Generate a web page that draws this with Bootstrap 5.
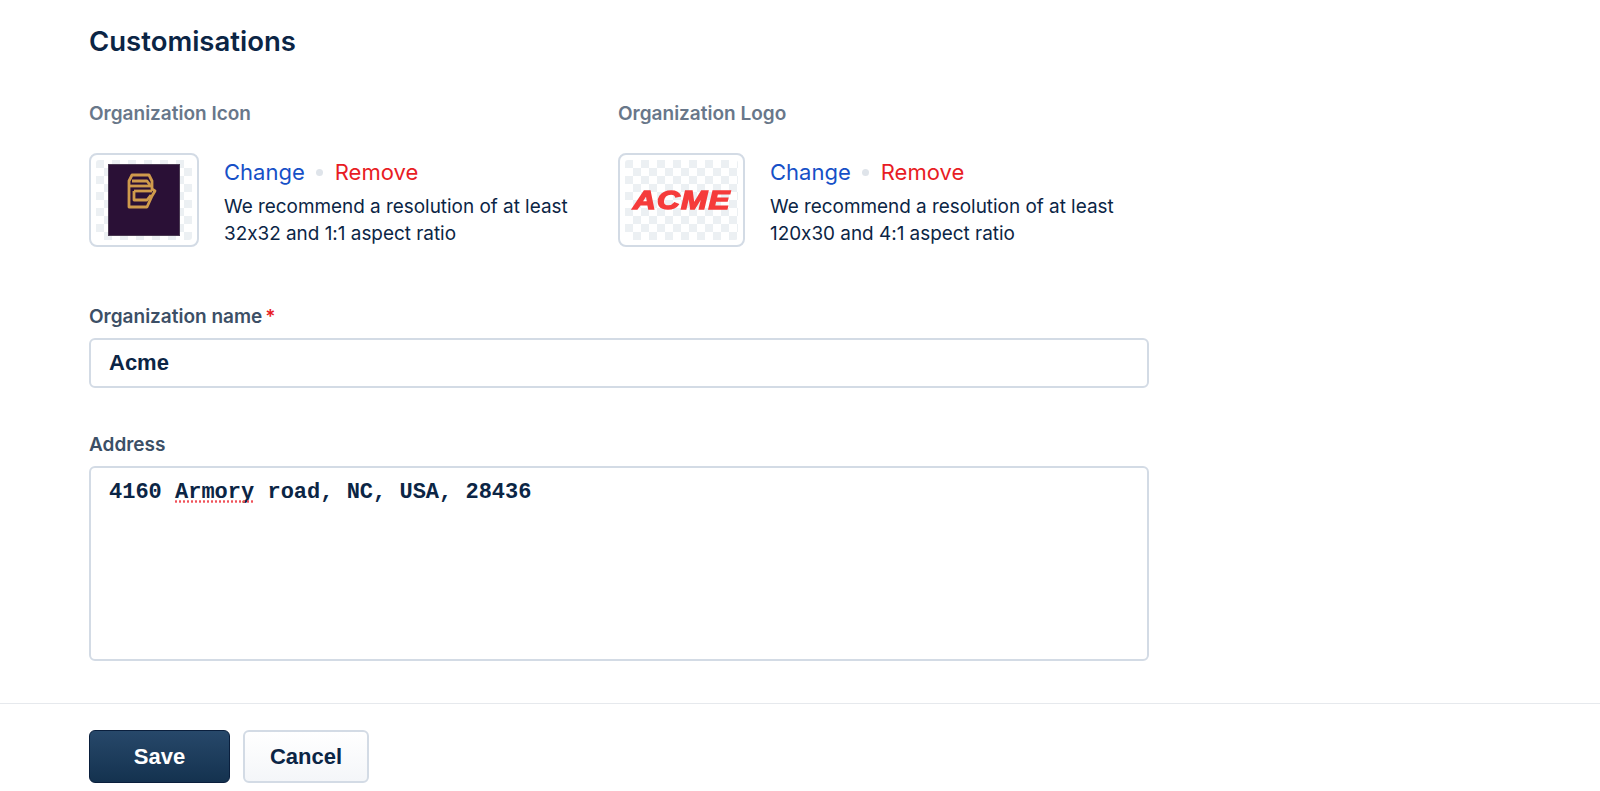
<!DOCTYPE html>
<html lang="en">
<head>
  <meta charset="UTF-8" />
  <meta name="viewport" content="width=device-width, initial-scale=1.0"/>
  <title>Customisations</title>
  <link href="https://cdn.jsdelivr.net/npm/bootstrap@5.3.0/dist/css/bootstrap.min.css" rel="stylesheet">
  <style>
    body { font-family: Inter, "Liberation Sans", sans-serif; font-feature-settings: "calt" 0; color: #0b2545; background: #fff; overflow: hidden; }
    .page-wrap { width: 1600px; height: 791px; padding-top: 25px; }
    .page-inner { padding-left: 89px; width: 1149px; }
    .page-title { font-size: 27.5px; line-height: 32px; font-weight: 600; color: #0b2545; margin: 0 0 46px; }
    .upload-label { font-size: 19px; line-height: 22px; font-weight: 600; color: #68778a; margin-bottom: 28px; }
    .upload-col-a { width: 529px; }
    .preview-box { height: 94px; border: 2px solid #d3dbe5; border-radius: 8px; padding: 5px; background: #fff; flex: none; }
    .preview-a { width: 110px; margin-right: 25px; }
    .preview-b { width: 127px; margin-right: 25px; }
    .checker { height: 100%; border-radius: 3px; display: flex; align-items: center; justify-content: center;
      background: repeating-conic-gradient(#ecf0f3 0 25%, #fff 0 50%) 8px 0 / 16px 16px; }
    .icon-tile { width: 72px; height: 72px; background: #2a1036; display: flex; justify-content: center; padding: 8px 4px 0 0; border: 1px solid #4a3a52; }
    .icon-tile svg { filter: blur(.7px); }
    .acme-mark { font-family: "Liberation Sans", sans-serif; font-weight: 700; font-style: italic; font-size: 25px; line-height: 1; letter-spacing: 1px; color: #f53b3b; -webkit-text-stroke: 1.4px #f53b3b; transform: scaleX(1.26); }
    .upload-actions { font-size: 22px; line-height: 26px; margin-top: 6px; margin-bottom: 8px; display: flex; align-items: center; }
    .act-change { color: #1650c7; text-decoration: none; }
    .act-remove { color: #e81c24; text-decoration: none; }
    .act-dot { width: 7px; height: 7px; border-radius: 50%; background: #dfe4ea; margin: 0 11.5px; }
    .upload-hint { font-size: 18.9px; line-height: 27px; color: #0b2545; }
    .field-label { font-size: 19px; line-height: 22px; font-weight: 600; color: #3c4f66; margin-bottom: 10px; display: block; }
    .req-star { color: #e81c24; margin-left: 3px; }
    .field-input.form-control { height: 50px; border: 2px solid #d3dbe5; border-radius: 6px; padding: 0 18px; font-family: "Liberation Sans", sans-serif; font-weight: 700; font-size: 22px; color: #0b2545; box-shadow: none; }
    .field-area.form-control { height: 195px; border: 2px solid #d3dbe5; border-radius: 6px; padding: 11px 18px; font-family: "Liberation Mono", monospace; font-weight: 700; font-size: 22px; line-height: 28px; color: #0b2545; resize: none; box-shadow: none; }
    .field-gap { margin-bottom: 46px; }
    .upload-row { margin-bottom: 59px; }
    .spell-mark { position: absolute; left: 85px; top: 34px; width: 79px; height: 3px; background: radial-gradient(circle, #f0525a 1px, transparent 1.4px) 0 0 / 4px 3px repeat-x; }
    .page-rule { margin: 42px 0 26px; border: 0; border-top: 1px solid #e6e9ed; opacity: 1; }
    .footer-actions { padding-left: 89px; gap: 13px; }
    .btn-save.btn { width: 141px; height: 53px; background: linear-gradient(#27486a, #14324f); border: 1px solid #0a1f3d; border-radius: 6px; color: #fff; font-family: "Liberation Sans", sans-serif; font-weight: 700; font-size: 22px; padding: 0; }
    .btn-cancel.btn { width: 126px; height: 53px; background: linear-gradient(#fff, #f4f6f9); border: 2px solid #d3dbe5; border-radius: 6px; color: #0b2545; font-family: "Liberation Sans", sans-serif; font-weight: 700; font-size: 22px; padding: 0; }
  </style>
</head>
<body>
<div class="page-wrap">
  <form>
    <div class="page-inner">
      <h1 class="page-title">Customisations</h1>

      <div class="d-flex upload-row">
        <div class="upload-col-a">
          <div class="upload-label">Organization Icon</div>
          <div class="d-flex">
            <div class="preview-box preview-a">
              <div class="checker">
                <div class="icon-tile">
                  <svg width="32" height="37" viewBox="0 0 32 37" fill="none" stroke="#cf9a4c" stroke-width="2.8" stroke-linejoin="round">
                    <path d="M6 2h17l3 6v8l3 2-3 5-5 11H3V8z"/>
                    <path d="M6 8h15l3 4"/>
                    <path d="M4 13h21"/>
                    <path d="M8 18h18"/>
                    <path d="M8 18v9h13l4-5"/>
                  </svg>
                </div>
              </div>
            </div>
            <div>
              <div class="upload-actions"><a href="#" class="act-change">Change</a><span class="act-dot"></span><a href="#" class="act-remove">Remove</a></div>
              <div class="upload-hint">We recommend a resolution of at least<br>32x32 and 1:1 aspect ratio</div>
            </div>
          </div>
        </div>
        <div>
          <div class="upload-label">Organization Logo</div>
          <div class="d-flex">
            <div class="preview-box preview-b">
              <div class="checker"><span class="acme-mark">ACME</span></div>
            </div>
            <div>
              <div class="upload-actions"><a href="#" class="act-change">Change</a><span class="act-dot"></span><a href="#" class="act-remove">Remove</a></div>
              <div class="upload-hint">We recommend a resolution of at least<br>120x30 and 4:1 aspect ratio</div>
            </div>
          </div>
        </div>
      </div>

      <div class="field-gap">
        <label class="field-label" for="orgName">Organization name<span class="req-star">*</span></label>
        <input type="text" class="form-control field-input" id="orgName" value="Acme">
      </div>

      <div>
        <label class="field-label" for="orgAddress">Address</label>
        <div class="position-relative">
          <textarea class="form-control field-area" id="orgAddress" spellcheck="false">4160 Armory road, NC, USA, 28436</textarea>
          <span class="spell-mark"></span>
        </div>
      </div>
    </div>

    <hr class="page-rule">

    <div class="footer-actions d-flex">
      <button type="button" class="btn btn-save">Save</button>
      <button type="button" class="btn btn-cancel">Cancel</button>
    </div>
  </form>
</div>
<script src="https://cdn.jsdelivr.net/npm/bootstrap@5.3.0/dist/js/bootstrap.bundle.min.js"></script>
</body>
</html>
